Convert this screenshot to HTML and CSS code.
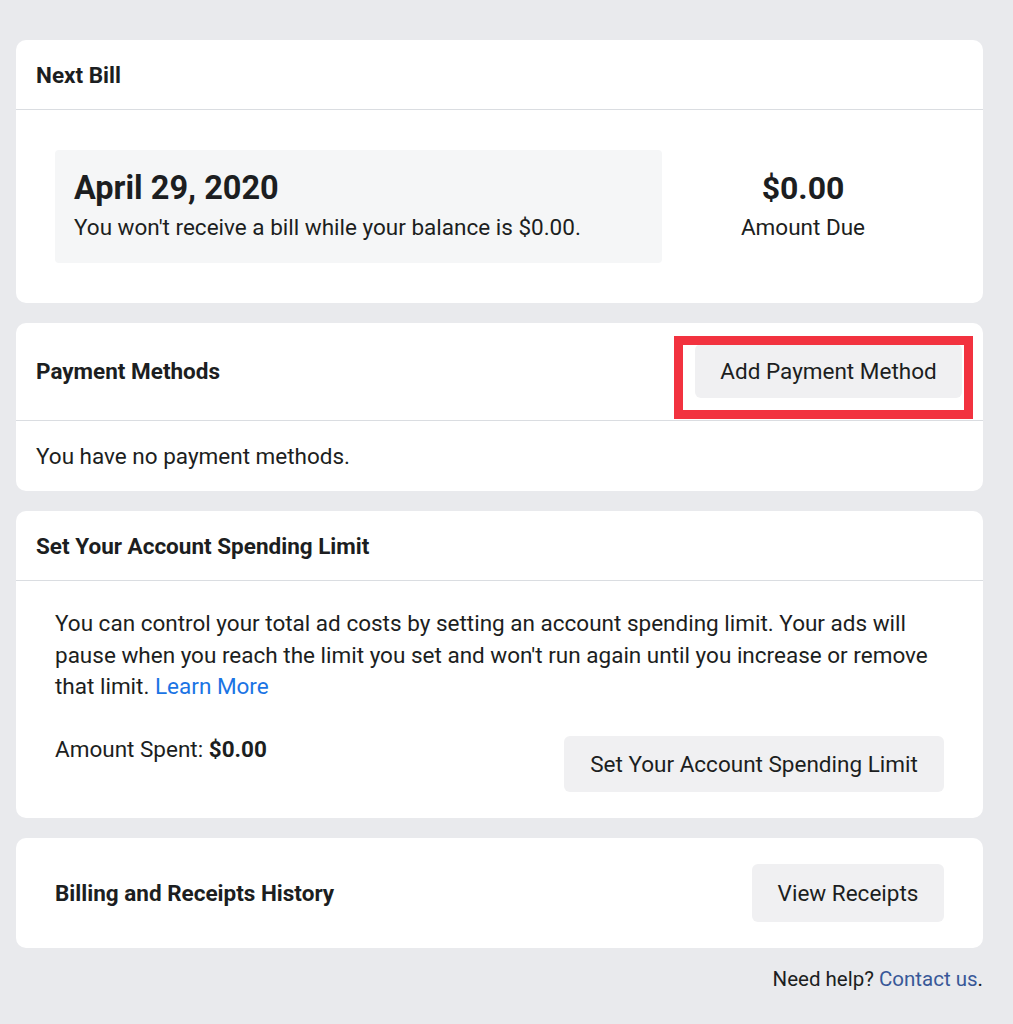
FILE: index.html
```html
<!DOCTYPE html>
<html lang="en">
<head>
<meta charset="utf-8">
<title>Billing</title>
<link rel="stylesheet" href="styles.css">
</head>
<body>
<main class="page">
  <section class="card">
    <header class="card-head"><h2 class="title">Next Bill</h2></header>
    <div class="bill-body">
      <div class="bill-box">
        <div class="bill-date">April 29, 2020</div>
        <div class="bill-note">You won't receive a bill while your balance is $0.00.</div>
      </div>
      <div class="due">
        <div class="due-amount">$0.00</div>
        <div class="due-label">Amount Due</div>
      </div>
    </div>
  </section>

  <section class="card">
    <header class="card-head with-btn">
      <h2 class="title">Payment Methods</h2>
      <div class="highlight-wrap">
        <button class="btn btn-add">Add Payment Method</button>
        <span class="highlight"></span>
      </div>
    </header>
    <div class="pm-body">You have no payment methods.</div>
  </section>

  <section class="card">
    <header class="card-head"><h2 class="title">Set Your Account Spending Limit</h2></header>
    <div class="limit-body">
      <p class="limit-text">You can control your total ad costs by setting an account spending limit. Your ads will pause when you reach the limit you set and won't run again until you increase or remove that limit. <a class="link" href="#">Learn More</a></p>
      <div class="limit-row">
        <div class="spent">Amount Spent: <b>$0.00</b></div>
        <button class="btn btn-limit">Set Your Account Spending Limit</button>
      </div>
    </div>
  </section>

  <section class="card receipts">
    <h2 class="title">Billing and Receipts History</h2>
    <button class="btn btn-receipts">View Receipts</button>
  </section>

  <footer class="help">Need help? <a class="help-link" href="#">Contact us</a>.</footer>
</main>
</body>
</html>
```

FILE: styles.css
```css
* { box-sizing: border-box; }
html, body { margin: 0; padding: 0; }
body {
  background: #e9eaed;
  font-family: Roboto, "Liberation Sans", Arial, sans-serif;
  color: #1c1e21;
}
.page {
  padding: 40px 30px 0 16px;
  display: flex;
  flex-direction: column;
  gap: 20px;
}
.card {
  background: #fff;
  border-radius: 10px;
}
.card-head {
  height: 70px;
  padding: 0 20px;
  display: flex;
  align-items: center;
  border-bottom: 1px solid #dadde1;
}
.title {
  margin: 0;
  font-size: 22.5px;
  font-weight: 700;
  color: #1c1e21;
}
.bill-body {
  display: flex;
  align-items: center;
  padding: 40px 39px 40px;
}
.bill-box {
  width: 607px;
  height: 113px;
  background: #f5f6f7;
  border-radius: 4px;
  padding: 0 19px 3px;
  display: flex;
  flex-direction: column;
  justify-content: center;
}
.bill-date {
  font-size: 32.5px;
  font-weight: 700;
  line-height: 40px;
}
.bill-note {
  font-size: 22.5px;
  line-height: 30px;
  margin-top: 4px;
}
.due {
  flex: 1;
  text-align: center;
  padding-bottom: 3px;
}
.due-amount {
  font-size: 32px;
  font-weight: 700;
  line-height: 40px;
}
.due-label {
  font-size: 22.5px;
  line-height: 30px;
  margin-top: 4px;
}
.with-btn {
  height: 98px;
  padding-bottom: 2px;
  justify-content: space-between;
}
.btn {
  border: 0;
  background: #f0f0f2;
  border-radius: 6px;
  font-family: inherit;
  font-size: 22.5px;
  color: #1c1e21;
  padding: 0 20px;
  cursor: pointer;
}
.highlight-wrap {
  position: relative;
  margin-right: 1px;
}
.btn-add {
  height: 54px;
  width: 267px;
  display: block;
}
.highlight {
  position: absolute;
  left: -21px;
  top: -8px;
  right: -11px;
  bottom: -21px;
  border: 9px solid #f2323f;
  pointer-events: none;
}
.pm-body {
  padding: 0 20px;
  height: 70px;
  display: flex;
  align-items: center;
  font-size: 22.5px;
}
.limit-body {
  padding: 27px 39px 26px;
}
.limit-text {
  margin: 0;
  font-size: 22.5px;
  line-height: 31.5px;
}
.link {
  color: #1b74e4;
  text-decoration: none;
}
.limit-row {
  display: flex;
  justify-content: space-between;
  align-items: flex-start;
  margin-top: 33px;
}
.spent {
  font-size: 22.5px;
  line-height: 26px;
}
.spent b { font-weight: 700; }
.btn-limit {
  height: 56px;
  width: 380px;
}
.receipts {
  height: 110px;
  display: flex;
  align-items: center;
  justify-content: space-between;
  padding: 0 39px;
}
.btn-receipts {
  height: 58px;
  width: 192px;
}
.help {
  text-align: right;
  font-size: 20.5px;
  margin-top: 0;
  line-height: 22px;
}
.help-link {
  color: #385898;
  text-decoration: none;
}
```
